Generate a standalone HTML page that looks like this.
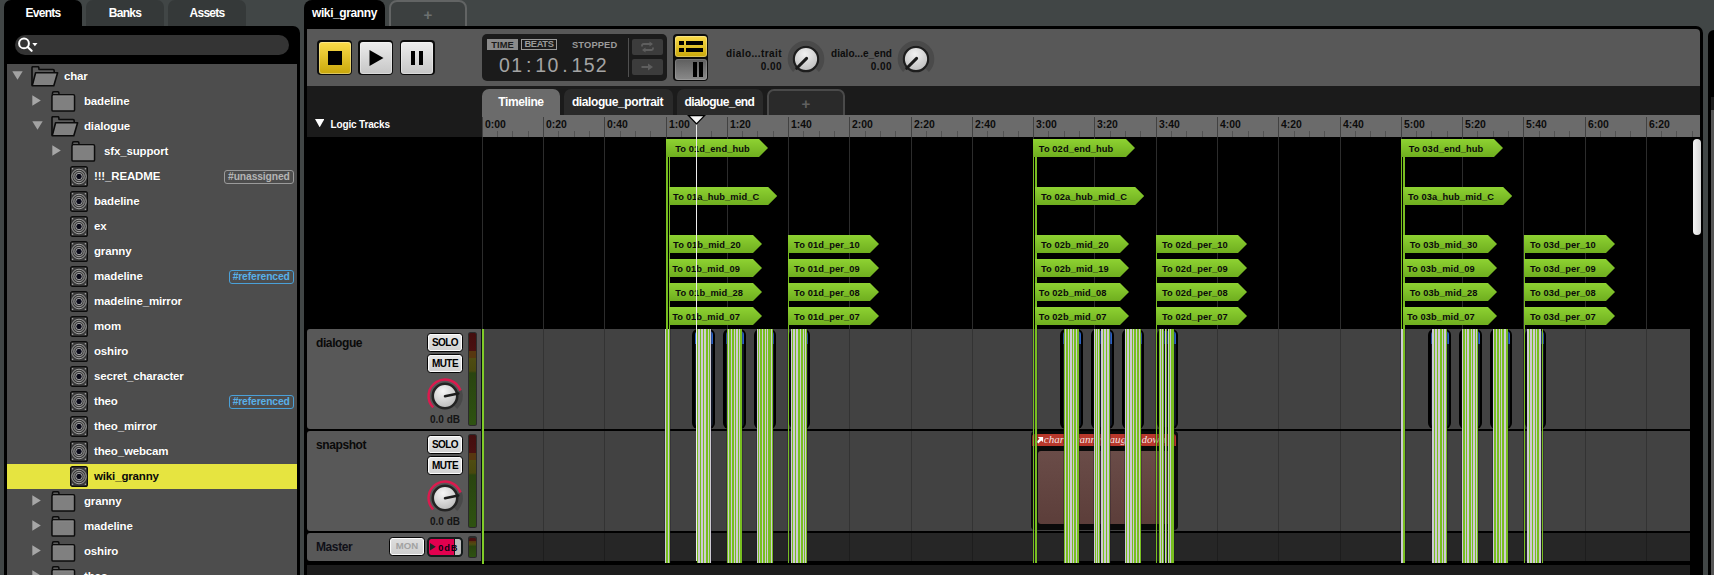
<!DOCTYPE html><html><head><meta charset="utf-8"><title>FMOD Studio</title><style>
*{box-sizing:border-box;margin:0;padding:0}
html,body{width:1714px;height:575px;overflow:hidden;background:#414646}
body{font-family:"Liberation Sans",sans-serif;font-weight:bold;font-size:12px;color:#fff;position:relative}
.ab{position:absolute}
.t12{font-size:12px;letter-spacing:-0.4px;white-space:nowrap;line-height:14px}
.t10{font-size:10px;letter-spacing:-0.3px;white-space:nowrap;line-height:12px}
.row{position:absolute;left:7px;width:290px;height:25px}
.row .lbl{position:absolute;top:5px;font-size:11.5px;letter-spacing:-0.15px;line-height:14px;white-space:nowrap;color:#fff;text-shadow:0 0 1px rgba(0,0,0,.4)}
.tag{position:absolute;right:3.5px;top:5.5px;height:14px;border:1px solid #9a9a9a;border-radius:3px;font-size:10.3px;line-height:12px;padding:0 2.8px;color:#b4b4b4;letter-spacing:-0.12px}
.tag.ref{border-color:#4aa0d8;color:#58b0e8}
.mk{position:absolute;height:18px;background:linear-gradient(#8ed232,#6fae1f);color:#0a0a0a;font-size:9.3px;letter-spacing:0.1px;line-height:20px;white-space:nowrap;text-align:left}
.hdr{position:absolute;left:307px;width:174px;background:#585858;border-radius:3px 0 0 3px}
.btn{position:absolute;border:1.75px solid #060606;border-radius:3.6px;background:linear-gradient(#e8e8e8,#d0d0d0);color:#000;font-size:10px;text-align:center;box-shadow:inset 0 0 0 1.1px #fbfbfb;letter-spacing:-0.55px}
.rl{position:absolute;top:119px;font-size:10.4px;line-height:12px;color:#0c0c0c;letter-spacing:0}
</style></head><body>
<div class="ab" style="left:4px;top:0;width:78px;height:30px;background:#000;border-radius:7px 7px 0 0"></div>
<div class="ab t12" style="left:4px;top:6px;width:78px;text-align:center;color:#fff;letter-spacing:-0.75px">Events</div>
<div class="ab" style="left:86px;top:0;width:78px;height:26px;background:#353939;border-radius:7px 7px 0 0"></div>
<div class="ab t12" style="left:86px;top:6px;width:78px;text-align:center;color:#fff;letter-spacing:-0.75px">Banks</div>
<div class="ab" style="left:168px;top:0;width:78px;height:26px;background:#353939;border-radius:7px 7px 0 0"></div>
<div class="ab t12" style="left:168px;top:6px;width:78px;text-align:center;color:#fff;letter-spacing:-0.75px">Assets</div>
<div class="ab" style="left:4px;top:26px;width:296px;height:560px;background:#000;border-radius:0 7px 0 0"></div>
<div class="ab" style="left:15px;top:35px;width:274px;height:20px;background:#343434;border-radius:10px"></div>
<svg class="ab" style="left:17px;top:36px" width="24" height="18" viewBox="0 0 24 18"><circle cx="7" cy="7.4" r="4.9" fill="none" stroke="#fff" stroke-width="2"/><path d="M10.6 11 L14.6 14.8" stroke="#fff" stroke-width="2.2" stroke-linecap="round"/><path d="M15.3 7 h5.2 l-2.6 3.2z" fill="#fff"/></svg>
<div class="ab" style="left:7px;top:64px;width:290px;height:520px;background:#4d4d4d"></div>
<div class="row" style="top:64px;">
<svg class="ab" style="left:4.6px;top:7.3px" width="11" height="9" viewBox="0 0 11 9"><path d="M0.3 0.3 H10.7 L5.5 8.8z" fill="#a2a2a2"/></svg>
<svg class="ab" style="left:24px;top:2px" width="28" height="21" viewBox="0 0 28 21"><path d="M1 19.500 V1.800 Q1 0.700 2.200 0.700 H6.600 Q7.700 0.700 7.800 1.700 L8 3.500 H22 Q23.200 3.500 23.200 4.700 V8" fill="#5a5a5a" stroke="#0c0c0c" stroke-width="1.600" stroke-linejoin="round"/><path d="M1.200 19.800 L4.600 6.800 H26.600 L22.800 19.800 Z" fill="#808080" stroke="#0c0c0c" stroke-width="1.600" stroke-linejoin="round"/></svg>
<span class="lbl" style="left:57px">char</span>
</div>
<div class="row" style="top:89px;">
<svg class="ab" style="left:25.299999999999997px;top:6.4px" width="9" height="11" viewBox="0 0 9 11"><path d="M0.3 0.3 V10.7 L8.8 5.5z" fill="#a6a6a6"/></svg>
<svg class="ab" style="left:44px;top:1.5px" width="25" height="21" viewBox="0 0 25 21"><path d="M1.500 3.800 V2 Q1.500 0.800 2.700 0.800 H6.700 Q7.900 0.800 7.900 2 V3.800" fill="#5c5c5c" stroke="#0c0c0c" stroke-width="1.500"/><rect x="0.950" y="3.700" width="22.600" height="16.400" rx="1.200" fill="#808080" stroke="#0c0c0c" stroke-width="1.500"/><path d="M2 5 H22.500" stroke="#8e8e8e" stroke-width="0.800"/></svg>
<span class="lbl" style="left:77px">badeline</span>
</div>
<div class="row" style="top:114px;">
<svg class="ab" style="left:24.6px;top:7.3px" width="11" height="9" viewBox="0 0 11 9"><path d="M0.3 0.3 H10.7 L5.5 8.8z" fill="#a2a2a2"/></svg>
<svg class="ab" style="left:44px;top:2px" width="28" height="21" viewBox="0 0 28 21"><path d="M1 19.500 V1.800 Q1 0.700 2.200 0.700 H6.600 Q7.700 0.700 7.800 1.700 L8 3.500 H22 Q23.200 3.500 23.200 4.700 V8" fill="#5a5a5a" stroke="#0c0c0c" stroke-width="1.600" stroke-linejoin="round"/><path d="M1.200 19.800 L4.600 6.800 H26.600 L22.800 19.800 Z" fill="#808080" stroke="#0c0c0c" stroke-width="1.600" stroke-linejoin="round"/></svg>
<span class="lbl" style="left:77px">dialogue</span>
</div>
<div class="row" style="top:139px;">
<svg class="ab" style="left:45.3px;top:6.4px" width="9" height="11" viewBox="0 0 9 11"><path d="M0.3 0.3 V10.7 L8.8 5.5z" fill="#a6a6a6"/></svg>
<svg class="ab" style="left:64px;top:1.5px" width="25" height="21" viewBox="0 0 25 21"><path d="M1.500 3.800 V2 Q1.500 0.800 2.700 0.800 H6.700 Q7.900 0.800 7.900 2 V3.800" fill="#5c5c5c" stroke="#0c0c0c" stroke-width="1.500"/><rect x="0.950" y="3.700" width="22.600" height="16.400" rx="1.200" fill="#808080" stroke="#0c0c0c" stroke-width="1.500"/><path d="M2 5 H22.500" stroke="#8e8e8e" stroke-width="0.800"/></svg>
<span class="lbl" style="left:97px">sfx_support</span>
</div>
<div class="row" style="top:164px;">
<svg class="ab" style="left:63px;top:2px" width="18" height="21" viewBox="0 0 18 21"><rect x="0.6" y="0.6" width="16.8" height="19.8" rx="2" fill="#3a3a3a" stroke="#0c0c0c" stroke-width="1.2"/><circle cx="9" cy="10.5" r="7.3" fill="none" stroke="#a8a8a8" stroke-width="0.9"/><circle cx="9" cy="10.5" r="5.2" fill="none" stroke="#a8a8a8" stroke-width="0.9"/><circle cx="9" cy="10.5" r="3.2" fill="#0a0a18" stroke="#b0b0b0" stroke-width="0.9"/><circle cx="2.6" cy="2.8" r="0.8" fill="#aaa"/><circle cx="15.4" cy="2.8" r="0.8" fill="#aaa"/><circle cx="2.6" cy="18.2" r="0.8" fill="#aaa"/><circle cx="15.4" cy="18.2" r="0.8" fill="#aaa"/></svg>
<span class="lbl" style="left:87px;">!!!_README</span>
<span class="tag">#unassigned</span>
</div>
<div class="row" style="top:189px;">
<svg class="ab" style="left:63px;top:2px" width="18" height="21" viewBox="0 0 18 21"><rect x="0.6" y="0.6" width="16.8" height="19.8" rx="2" fill="#3a3a3a" stroke="#0c0c0c" stroke-width="1.2"/><circle cx="9" cy="10.5" r="7.3" fill="none" stroke="#a8a8a8" stroke-width="0.9"/><circle cx="9" cy="10.5" r="5.2" fill="none" stroke="#a8a8a8" stroke-width="0.9"/><circle cx="9" cy="10.5" r="3.2" fill="#0a0a18" stroke="#b0b0b0" stroke-width="0.9"/><circle cx="2.6" cy="2.8" r="0.8" fill="#aaa"/><circle cx="15.4" cy="2.8" r="0.8" fill="#aaa"/><circle cx="2.6" cy="18.2" r="0.8" fill="#aaa"/><circle cx="15.4" cy="18.2" r="0.8" fill="#aaa"/></svg>
<span class="lbl" style="left:87px;">badeline</span>
</div>
<div class="row" style="top:214px;">
<svg class="ab" style="left:63px;top:2px" width="18" height="21" viewBox="0 0 18 21"><rect x="0.6" y="0.6" width="16.8" height="19.8" rx="2" fill="#3a3a3a" stroke="#0c0c0c" stroke-width="1.2"/><circle cx="9" cy="10.5" r="7.3" fill="none" stroke="#a8a8a8" stroke-width="0.9"/><circle cx="9" cy="10.5" r="5.2" fill="none" stroke="#a8a8a8" stroke-width="0.9"/><circle cx="9" cy="10.5" r="3.2" fill="#0a0a18" stroke="#b0b0b0" stroke-width="0.9"/><circle cx="2.6" cy="2.8" r="0.8" fill="#aaa"/><circle cx="15.4" cy="2.8" r="0.8" fill="#aaa"/><circle cx="2.6" cy="18.2" r="0.8" fill="#aaa"/><circle cx="15.4" cy="18.2" r="0.8" fill="#aaa"/></svg>
<span class="lbl" style="left:87px;">ex</span>
</div>
<div class="row" style="top:239px;">
<svg class="ab" style="left:63px;top:2px" width="18" height="21" viewBox="0 0 18 21"><rect x="0.6" y="0.6" width="16.8" height="19.8" rx="2" fill="#3a3a3a" stroke="#0c0c0c" stroke-width="1.2"/><circle cx="9" cy="10.5" r="7.3" fill="none" stroke="#a8a8a8" stroke-width="0.9"/><circle cx="9" cy="10.5" r="5.2" fill="none" stroke="#a8a8a8" stroke-width="0.9"/><circle cx="9" cy="10.5" r="3.2" fill="#0a0a18" stroke="#b0b0b0" stroke-width="0.9"/><circle cx="2.6" cy="2.8" r="0.8" fill="#aaa"/><circle cx="15.4" cy="2.8" r="0.8" fill="#aaa"/><circle cx="2.6" cy="18.2" r="0.8" fill="#aaa"/><circle cx="15.4" cy="18.2" r="0.8" fill="#aaa"/></svg>
<span class="lbl" style="left:87px;">granny</span>
</div>
<div class="row" style="top:264px;">
<svg class="ab" style="left:63px;top:2px" width="18" height="21" viewBox="0 0 18 21"><rect x="0.6" y="0.6" width="16.8" height="19.8" rx="2" fill="#3a3a3a" stroke="#0c0c0c" stroke-width="1.2"/><circle cx="9" cy="10.5" r="7.3" fill="none" stroke="#a8a8a8" stroke-width="0.9"/><circle cx="9" cy="10.5" r="5.2" fill="none" stroke="#a8a8a8" stroke-width="0.9"/><circle cx="9" cy="10.5" r="3.2" fill="#0a0a18" stroke="#b0b0b0" stroke-width="0.9"/><circle cx="2.6" cy="2.8" r="0.8" fill="#aaa"/><circle cx="15.4" cy="2.8" r="0.8" fill="#aaa"/><circle cx="2.6" cy="18.2" r="0.8" fill="#aaa"/><circle cx="15.4" cy="18.2" r="0.8" fill="#aaa"/></svg>
<span class="lbl" style="left:87px;">madeline</span>
<span class="tag ref">#referenced</span>
</div>
<div class="row" style="top:289px;">
<svg class="ab" style="left:63px;top:2px" width="18" height="21" viewBox="0 0 18 21"><rect x="0.6" y="0.6" width="16.8" height="19.8" rx="2" fill="#3a3a3a" stroke="#0c0c0c" stroke-width="1.2"/><circle cx="9" cy="10.5" r="7.3" fill="none" stroke="#a8a8a8" stroke-width="0.9"/><circle cx="9" cy="10.5" r="5.2" fill="none" stroke="#a8a8a8" stroke-width="0.9"/><circle cx="9" cy="10.5" r="3.2" fill="#0a0a18" stroke="#b0b0b0" stroke-width="0.9"/><circle cx="2.6" cy="2.8" r="0.8" fill="#aaa"/><circle cx="15.4" cy="2.8" r="0.8" fill="#aaa"/><circle cx="2.6" cy="18.2" r="0.8" fill="#aaa"/><circle cx="15.4" cy="18.2" r="0.8" fill="#aaa"/></svg>
<span class="lbl" style="left:87px;">madeline_mirror</span>
</div>
<div class="row" style="top:314px;">
<svg class="ab" style="left:63px;top:2px" width="18" height="21" viewBox="0 0 18 21"><rect x="0.6" y="0.6" width="16.8" height="19.8" rx="2" fill="#3a3a3a" stroke="#0c0c0c" stroke-width="1.2"/><circle cx="9" cy="10.5" r="7.3" fill="none" stroke="#a8a8a8" stroke-width="0.9"/><circle cx="9" cy="10.5" r="5.2" fill="none" stroke="#a8a8a8" stroke-width="0.9"/><circle cx="9" cy="10.5" r="3.2" fill="#0a0a18" stroke="#b0b0b0" stroke-width="0.9"/><circle cx="2.6" cy="2.8" r="0.8" fill="#aaa"/><circle cx="15.4" cy="2.8" r="0.8" fill="#aaa"/><circle cx="2.6" cy="18.2" r="0.8" fill="#aaa"/><circle cx="15.4" cy="18.2" r="0.8" fill="#aaa"/></svg>
<span class="lbl" style="left:87px;">mom</span>
</div>
<div class="row" style="top:339px;">
<svg class="ab" style="left:63px;top:2px" width="18" height="21" viewBox="0 0 18 21"><rect x="0.6" y="0.6" width="16.8" height="19.8" rx="2" fill="#3a3a3a" stroke="#0c0c0c" stroke-width="1.2"/><circle cx="9" cy="10.5" r="7.3" fill="none" stroke="#a8a8a8" stroke-width="0.9"/><circle cx="9" cy="10.5" r="5.2" fill="none" stroke="#a8a8a8" stroke-width="0.9"/><circle cx="9" cy="10.5" r="3.2" fill="#0a0a18" stroke="#b0b0b0" stroke-width="0.9"/><circle cx="2.6" cy="2.8" r="0.8" fill="#aaa"/><circle cx="15.4" cy="2.8" r="0.8" fill="#aaa"/><circle cx="2.6" cy="18.2" r="0.8" fill="#aaa"/><circle cx="15.4" cy="18.2" r="0.8" fill="#aaa"/></svg>
<span class="lbl" style="left:87px;">oshiro</span>
</div>
<div class="row" style="top:364px;">
<svg class="ab" style="left:63px;top:2px" width="18" height="21" viewBox="0 0 18 21"><rect x="0.6" y="0.6" width="16.8" height="19.8" rx="2" fill="#3a3a3a" stroke="#0c0c0c" stroke-width="1.2"/><circle cx="9" cy="10.5" r="7.3" fill="none" stroke="#a8a8a8" stroke-width="0.9"/><circle cx="9" cy="10.5" r="5.2" fill="none" stroke="#a8a8a8" stroke-width="0.9"/><circle cx="9" cy="10.5" r="3.2" fill="#0a0a18" stroke="#b0b0b0" stroke-width="0.9"/><circle cx="2.6" cy="2.8" r="0.8" fill="#aaa"/><circle cx="15.4" cy="2.8" r="0.8" fill="#aaa"/><circle cx="2.6" cy="18.2" r="0.8" fill="#aaa"/><circle cx="15.4" cy="18.2" r="0.8" fill="#aaa"/></svg>
<span class="lbl" style="left:87px;">secret_character</span>
</div>
<div class="row" style="top:389px;">
<svg class="ab" style="left:63px;top:2px" width="18" height="21" viewBox="0 0 18 21"><rect x="0.6" y="0.6" width="16.8" height="19.8" rx="2" fill="#3a3a3a" stroke="#0c0c0c" stroke-width="1.2"/><circle cx="9" cy="10.5" r="7.3" fill="none" stroke="#a8a8a8" stroke-width="0.9"/><circle cx="9" cy="10.5" r="5.2" fill="none" stroke="#a8a8a8" stroke-width="0.9"/><circle cx="9" cy="10.5" r="3.2" fill="#0a0a18" stroke="#b0b0b0" stroke-width="0.9"/><circle cx="2.6" cy="2.8" r="0.8" fill="#aaa"/><circle cx="15.4" cy="2.8" r="0.8" fill="#aaa"/><circle cx="2.6" cy="18.2" r="0.8" fill="#aaa"/><circle cx="15.4" cy="18.2" r="0.8" fill="#aaa"/></svg>
<span class="lbl" style="left:87px;">theo</span>
<span class="tag ref">#referenced</span>
</div>
<div class="row" style="top:414px;">
<svg class="ab" style="left:63px;top:2px" width="18" height="21" viewBox="0 0 18 21"><rect x="0.6" y="0.6" width="16.8" height="19.8" rx="2" fill="#3a3a3a" stroke="#0c0c0c" stroke-width="1.2"/><circle cx="9" cy="10.5" r="7.3" fill="none" stroke="#a8a8a8" stroke-width="0.9"/><circle cx="9" cy="10.5" r="5.2" fill="none" stroke="#a8a8a8" stroke-width="0.9"/><circle cx="9" cy="10.5" r="3.2" fill="#0a0a18" stroke="#b0b0b0" stroke-width="0.9"/><circle cx="2.6" cy="2.8" r="0.8" fill="#aaa"/><circle cx="15.4" cy="2.8" r="0.8" fill="#aaa"/><circle cx="2.6" cy="18.2" r="0.8" fill="#aaa"/><circle cx="15.4" cy="18.2" r="0.8" fill="#aaa"/></svg>
<span class="lbl" style="left:87px;">theo_mirror</span>
</div>
<div class="row" style="top:439px;">
<svg class="ab" style="left:63px;top:2px" width="18" height="21" viewBox="0 0 18 21"><rect x="0.6" y="0.6" width="16.8" height="19.8" rx="2" fill="#3a3a3a" stroke="#0c0c0c" stroke-width="1.2"/><circle cx="9" cy="10.5" r="7.3" fill="none" stroke="#a8a8a8" stroke-width="0.9"/><circle cx="9" cy="10.5" r="5.2" fill="none" stroke="#a8a8a8" stroke-width="0.9"/><circle cx="9" cy="10.5" r="3.2" fill="#0a0a18" stroke="#b0b0b0" stroke-width="0.9"/><circle cx="2.6" cy="2.8" r="0.8" fill="#aaa"/><circle cx="15.4" cy="2.8" r="0.8" fill="#aaa"/><circle cx="2.6" cy="18.2" r="0.8" fill="#aaa"/><circle cx="15.4" cy="18.2" r="0.8" fill="#aaa"/></svg>
<span class="lbl" style="left:87px;">theo_webcam</span>
</div>
<div class="row" style="top:464px;background:#e6e440;">
<svg class="ab" style="left:63px;top:2px" width="18" height="21" viewBox="0 0 18 21"><rect x="0.6" y="0.6" width="16.8" height="19.8" rx="2" fill="#3a3a3a" stroke="#0c0c0c" stroke-width="1.2"/><circle cx="9" cy="10.5" r="7.3" fill="none" stroke="#a8a8a8" stroke-width="0.9"/><circle cx="9" cy="10.5" r="5.2" fill="none" stroke="#a8a8a8" stroke-width="0.9"/><circle cx="9" cy="10.5" r="3.2" fill="#0a0a18" stroke="#b0b0b0" stroke-width="0.9"/><circle cx="2.6" cy="2.8" r="0.8" fill="#aaa"/><circle cx="15.4" cy="2.8" r="0.8" fill="#aaa"/><circle cx="2.6" cy="18.2" r="0.8" fill="#aaa"/><circle cx="15.4" cy="18.2" r="0.8" fill="#aaa"/></svg>
<span class="lbl" style="left:87px;color:#0a0a0a;text-shadow:none;">wiki_granny</span>
</div>
<div class="row" style="top:489px;">
<svg class="ab" style="left:25.299999999999997px;top:6.4px" width="9" height="11" viewBox="0 0 9 11"><path d="M0.3 0.3 V10.7 L8.8 5.5z" fill="#a6a6a6"/></svg>
<svg class="ab" style="left:44px;top:1.5px" width="25" height="21" viewBox="0 0 25 21"><path d="M1.500 3.800 V2 Q1.500 0.800 2.700 0.800 H6.700 Q7.900 0.800 7.900 2 V3.800" fill="#5c5c5c" stroke="#0c0c0c" stroke-width="1.500"/><rect x="0.950" y="3.700" width="22.600" height="16.400" rx="1.200" fill="#808080" stroke="#0c0c0c" stroke-width="1.500"/><path d="M2 5 H22.500" stroke="#8e8e8e" stroke-width="0.800"/></svg>
<span class="lbl" style="left:77px">granny</span>
</div>
<div class="row" style="top:514px;">
<svg class="ab" style="left:25.299999999999997px;top:6.4px" width="9" height="11" viewBox="0 0 9 11"><path d="M0.3 0.3 V10.7 L8.8 5.5z" fill="#a6a6a6"/></svg>
<svg class="ab" style="left:44px;top:1.5px" width="25" height="21" viewBox="0 0 25 21"><path d="M1.500 3.800 V2 Q1.500 0.800 2.700 0.800 H6.700 Q7.900 0.800 7.900 2 V3.800" fill="#5c5c5c" stroke="#0c0c0c" stroke-width="1.500"/><rect x="0.950" y="3.700" width="22.600" height="16.400" rx="1.200" fill="#808080" stroke="#0c0c0c" stroke-width="1.500"/><path d="M2 5 H22.500" stroke="#8e8e8e" stroke-width="0.800"/></svg>
<span class="lbl" style="left:77px">madeline</span>
</div>
<div class="row" style="top:539px;">
<svg class="ab" style="left:25.299999999999997px;top:6.4px" width="9" height="11" viewBox="0 0 9 11"><path d="M0.3 0.3 V10.7 L8.8 5.5z" fill="#a6a6a6"/></svg>
<svg class="ab" style="left:44px;top:1.5px" width="25" height="21" viewBox="0 0 25 21"><path d="M1.500 3.800 V2 Q1.500 0.800 2.700 0.800 H6.700 Q7.900 0.800 7.900 2 V3.800" fill="#5c5c5c" stroke="#0c0c0c" stroke-width="1.500"/><rect x="0.950" y="3.700" width="22.600" height="16.400" rx="1.200" fill="#808080" stroke="#0c0c0c" stroke-width="1.500"/><path d="M2 5 H22.500" stroke="#8e8e8e" stroke-width="0.800"/></svg>
<span class="lbl" style="left:77px">oshiro</span>
</div>
<div class="row" style="top:564px;">
<svg class="ab" style="left:25.299999999999997px;top:6.4px" width="9" height="11" viewBox="0 0 9 11"><path d="M0.3 0.3 V10.7 L8.8 5.5z" fill="#a6a6a6"/></svg>
<svg class="ab" style="left:44px;top:1.5px" width="25" height="21" viewBox="0 0 25 21"><path d="M1.500 3.800 V2 Q1.500 0.800 2.700 0.800 H6.700 Q7.900 0.800 7.900 2 V3.800" fill="#5c5c5c" stroke="#0c0c0c" stroke-width="1.500"/><rect x="0.950" y="3.700" width="22.600" height="16.400" rx="1.200" fill="#808080" stroke="#0c0c0c" stroke-width="1.500"/><path d="M2 5 H22.500" stroke="#8e8e8e" stroke-width="0.800"/></svg>
<span class="lbl" style="left:77px">theo</span>
</div>
<div class="ab" style="left:304px;top:0;width:81px;height:30px;background:#000;border-radius:8px 8px 0 0"></div>
<div class="ab t12" style="left:312px;top:6px;color:#fff">wiki_granny</div>
<div class="ab" style="left:389px;top:-0.5px;width:78px;height:30px;border:2px solid #626464;border-radius:8px 8px 0 0;background:#3c4040"></div>
<div class="ab" style="left:389px;top:6.5px;width:78px;text-align:center;color:#6c7070;font-size:15px;line-height:16px">+</div>
<div class="ab" style="left:304px;top:26px;width:1399px;height:560px;background:#000;border-radius:0 7px 0 0"></div>
<div class="ab" style="left:1708px;top:30px;width:10px;height:560px;background:#000;border-radius:6px 0 0 0"></div>
<div class="ab" style="left:1711px;top:97px;width:10px;height:13px;background:#1c1c1c"></div>
<div class="ab" style="left:1711px;top:110px;width:10px;height:500px;background:#565656"></div>
<div class="ab" style="left:307px;top:29px;width:1393px;height:57px;background:#585858;border-radius:0 4px 0 0"></div>
<div class="ab" style="left:307px;top:86px;width:1393px;height:51px;background:#1b1b1b"></div>
<div class="ab" style="left:307px;top:564.5px;width:1383px;height:20px;background:#1c1c1c"></div>
<div class="ab" style="left:317px;top:40px;width:35px;height:35px;background:#0c0c0c;border-radius:4px"></div>
<div class="ab" style="left:318.5px;top:41.5px;width:32px;height:32px;background:linear-gradient(#fbdc4a,#c9a70a);border-radius:3px;box-shadow:inset 0 0 0 1px rgba(255,255,255,.35)"></div>
<div class="ab" style="left:328px;top:51px;width:14px;height:14px;background:#000"></div>
<div class="ab" style="left:358px;top:40px;width:35px;height:35px;background:#0c0c0c;border-radius:4px"></div>
<div class="ab" style="left:359.5px;top:41.5px;width:32px;height:32px;background:linear-gradient(#ececec,#c6c6c6);border-radius:3px;box-shadow:inset 0 0 0 1px rgba(255,255,255,.35)"></div>
<svg class="ab" style="left:369px;top:50px" width="15" height="16" viewBox="0 0 15 16"><path d="M0.5 0 L14.5 8 L0.5 16z" fill="#000"/></svg>
<div class="ab" style="left:399.5px;top:40px;width:35px;height:35px;background:#0c0c0c;border-radius:4px"></div>
<div class="ab" style="left:401.0px;top:41.5px;width:32px;height:32px;background:linear-gradient(#ececec,#c6c6c6);border-radius:3px;box-shadow:inset 0 0 0 1px rgba(255,255,255,.35)"></div>
<div class="ab" style="left:411px;top:51px;width:4px;height:14px;background:#000"></div><div class="ab" style="left:418.5px;top:51px;width:4px;height:14px;background:#000"></div>
<div class="ab" style="left:482px;top:34px;width:185px;height:47px;background:#1b1b1b;border-radius:5px"></div>
<div class="ab" style="left:487px;top:39px;width:31px;height:11px;background:#8a8a8a;color:#1a1a1a;font-size:9.3px;line-height:12.5px;text-align:center;letter-spacing:0.1px">TIME</div>
<div class="ab" style="left:521px;top:39px;width:36px;height:11px;border:1px solid #9a9a9a;color:#9a9a9a;line-height:9.5px;text-align:center;letter-spacing:-0.35px;font-size:9.3px">BEATS</div>
<div class="ab" style="left:572px;top:39px;color:#9a9a9a;font-size:9.3px;line-height:12px;letter-spacing:0.15px">STOPPED</div>
<div class="ab" style="left:498.5px;top:53px;color:#a4a4a4;font-weight:normal;font-size:19.5px;line-height:24px;white-space:nowrap"><span style="display:inline-block;width:12.08px;text-align:center">0</span><span style="display:inline-block;width:12.08px;text-align:center">1</span><span style="display:inline-block;width:12.08px;text-align:center">:</span><span style="display:inline-block;width:12.08px;text-align:center">1</span><span style="display:inline-block;width:12.08px;text-align:center">0</span><span style="display:inline-block;width:12.08px;text-align:center">.</span><span style="display:inline-block;width:12.08px;text-align:center">1</span><span style="display:inline-block;width:12.08px;text-align:center">5</span><span style="display:inline-block;width:12.08px;text-align:center">2</span></div>
<div class="ab" style="left:628px;top:38px;width:1px;height:39px;background:#505050"></div>
<div class="ab" style="left:632px;top:39px;width:31px;height:16px;background:#3c3c3c;border-radius:2px"></div>
<div class="ab" style="left:632px;top:59px;width:31px;height:16px;background:#3c3c3c;border-radius:2px"></div>
<svg class="ab" style="left:640px;top:41px" width="15" height="12" viewBox="0 0 15 12"><path d="M2 5.5 V4.5 Q2 3 3.5 3 H10" fill="none" stroke="#5e5e5e" stroke-width="1.8"/><path d="M9.5 0.5 L13 3 L9.5 5.5z" fill="#5e5e5e"/><path d="M13 6.5 V7.5 Q13 9 11.5 9 H5" fill="none" stroke="#5e5e5e" stroke-width="1.8"/><path d="M5.5 6.500 L2 9 L5.5 11.5z" fill="#5e5e5e"/></svg>
<svg class="ab" style="left:641px;top:62px" width="13" height="10" viewBox="0 0 13 10"><path d="M0.5 5 H8" stroke="#5e5e5e" stroke-width="2"/><path d="M7 1.5 L12 5 L7 8.5z" fill="#5e5e5e"/></svg>
<div class="ab" style="left:673px;top:34px;width:35px;height:47px;background:#0c0c0c;border-radius:4px"></div>
<div class="ab" style="left:675px;top:36px;width:32px;height:21px;background:linear-gradient(#fbdc4a,#c9a70a);border-radius:3px;box-shadow:inset 0 0 0 1px rgba(255,255,255,.3)"></div>
<div class="ab" style="left:675px;top:59px;width:32px;height:21px;background:linear-gradient(#5e5e5e,#8a8a8a);border-radius:3px;box-shadow:inset 0 0 0 1px rgba(255,255,255,.15)"></div>
<div class="ab" style="left:679px;top:41px;width:5px;height:4px;background:#000"></div><div class="ab" style="left:686px;top:41px;width:17px;height:4px;background:#000"></div>
<div class="ab" style="left:679px;top:48px;width:5px;height:4px;background:#000"></div><div class="ab" style="left:686px;top:48px;width:17px;height:4px;background:#000"></div>
<div class="ab" style="left:693px;top:62px;width:3.5px;height:15px;background:#000"></div><div class="ab" style="left:699px;top:62px;width:3.5px;height:15px;background:#000"></div>
<div class="ab t10" style="left:702px;top:47.6px;width:80px;text-align:right;color:#0c0c0c;letter-spacing:0.42px">dialo...trait</div>
<div class="ab t10" style="left:702px;top:60.5px;width:80px;text-align:right;color:#0c0c0c;letter-spacing:0.45px">0.00</div>
<svg class="ab" style="left:786px;top:39px" width="40" height="40" viewBox="-20 -20 40 40"><defs><radialGradient id="kg806" cx="0.45" cy="0.3" r="0.8"><stop offset="0" stop-color="#f2f2f2"/><stop offset="1" stop-color="#b6b6b6"/></radialGradient></defs><path d="M-11.240 11.240 A15.900 15.900 0 1 1 11.240 11.240" fill="none" stroke="#4a4a4a" stroke-width="4.800"/><circle r="12.2" fill="url(#kg806)" stroke="#1e1e1e" stroke-width="2.2"/><path d="M0.600 -0.600 L-9.300 9.300" stroke="#1a1a1a" stroke-width="3" stroke-linecap="round"/></svg>
<div class="ab t10" style="left:812px;top:47.6px;width:80px;text-align:right;color:#0c0c0c;letter-spacing:0.03px">dialo...e_end</div>
<div class="ab t10" style="left:812px;top:60.5px;width:80px;text-align:right;color:#0c0c0c;letter-spacing:0.45px">0.00</div>
<svg class="ab" style="left:896.3px;top:39px" width="40" height="40" viewBox="-20 -20 40 40"><defs><radialGradient id="kg916" cx="0.45" cy="0.3" r="0.8"><stop offset="0" stop-color="#f2f2f2"/><stop offset="1" stop-color="#b6b6b6"/></radialGradient></defs><path d="M-11.240 11.240 A15.900 15.900 0 1 1 11.240 11.240" fill="none" stroke="#4a4a4a" stroke-width="4.800"/><circle r="12.2" fill="url(#kg916)" stroke="#1e1e1e" stroke-width="2.2"/><path d="M0.600 -0.600 L-9.300 9.300" stroke="#1a1a1a" stroke-width="3" stroke-linecap="round"/></svg>
<div class="ab" style="left:482px;top:89px;width:78px;height:27px;background:#6b6b6b;border-radius:7px 7px 0 0"></div>
<div class="ab t12" style="left:482px;top:95px;width:78px;text-align:center">Timeline</div>
<div class="ab" style="left:564px;top:89px;width:109px;height:26px;background:#2a2a2a;border-radius:7px 7px 0 0"></div>
<div class="ab t12" style="left:563px;top:95px;width:109px;text-align:center">dialogue_portrait</div>
<div class="ab" style="left:677px;top:89px;width:86px;height:26px;background:#2a2a2a;border-radius:7px 7px 0 0"></div>
<div class="ab t12" style="left:676.3px;top:95px;width:86px;text-align:center;letter-spacing:-0.65px">dialogue_end</div>
<div class="ab" style="left:767px;top:89px;width:78px;height:28px;border:2px solid #4a4a4a;border-radius:7px 7px 0 0;background:#2a2a2a"></div>
<div class="ab" style="left:767px;top:95.5px;width:78px;text-align:center;color:#606060;font-size:15px;line-height:16px">+</div>
<div class="ab" style="left:482px;top:115px;width:1218px;height:22px;background:#6b6b6b"></div>
<svg class="ab" style="left:314.7px;top:119px" width="9.4" height="8.3" viewBox="0 0 10 8" preserveAspectRatio="none"><path d="M0 0 H10 L5 8z" fill="#fff"/></svg>
<div class="ab t10" style="left:330.5px;top:118.6px;color:#fff;letter-spacing:-0.15px">Logic Tracks</div>
<div class="ab" style="left:497px;top:131px;width:1px;height:6px;background:#525252"></div>
<div class="ab" style="left:512px;top:131px;width:1px;height:6px;background:#525252"></div>
<div class="ab" style="left:528px;top:131px;width:1px;height:6px;background:#525252"></div>
<div class="ab" style="left:558px;top:131px;width:1px;height:6px;background:#525252"></div>
<div class="ab" style="left:574px;top:131px;width:1px;height:6px;background:#525252"></div>
<div class="ab" style="left:589px;top:131px;width:1px;height:6px;background:#525252"></div>
<div class="ab" style="left:620px;top:131px;width:1px;height:6px;background:#525252"></div>
<div class="ab" style="left:635px;top:131px;width:1px;height:6px;background:#525252"></div>
<div class="ab" style="left:650px;top:131px;width:1px;height:6px;background:#525252"></div>
<div class="ab" style="left:681px;top:131px;width:1px;height:6px;background:#525252"></div>
<div class="ab" style="left:696px;top:131px;width:1px;height:6px;background:#525252"></div>
<div class="ab" style="left:711px;top:131px;width:1px;height:6px;background:#525252"></div>
<div class="ab" style="left:742px;top:131px;width:1px;height:6px;background:#525252"></div>
<div class="ab" style="left:757px;top:131px;width:1px;height:6px;background:#525252"></div>
<div class="ab" style="left:773px;top:131px;width:1px;height:6px;background:#525252"></div>
<div class="ab" style="left:803px;top:131px;width:1px;height:6px;background:#525252"></div>
<div class="ab" style="left:819px;top:131px;width:1px;height:6px;background:#525252"></div>
<div class="ab" style="left:834px;top:131px;width:1px;height:6px;background:#525252"></div>
<div class="ab" style="left:865px;top:131px;width:1px;height:6px;background:#525252"></div>
<div class="ab" style="left:880px;top:131px;width:1px;height:6px;background:#525252"></div>
<div class="ab" style="left:895px;top:131px;width:1px;height:6px;background:#525252"></div>
<div class="ab" style="left:926px;top:131px;width:1px;height:6px;background:#525252"></div>
<div class="ab" style="left:941px;top:131px;width:1px;height:6px;background:#525252"></div>
<div class="ab" style="left:957px;top:131px;width:1px;height:6px;background:#525252"></div>
<div class="ab" style="left:987px;top:131px;width:1px;height:6px;background:#525252"></div>
<div class="ab" style="left:1003px;top:131px;width:1px;height:6px;background:#525252"></div>
<div class="ab" style="left:1018px;top:131px;width:1px;height:6px;background:#525252"></div>
<div class="ab" style="left:1048px;top:131px;width:1px;height:6px;background:#525252"></div>
<div class="ab" style="left:1064px;top:131px;width:1px;height:6px;background:#525252"></div>
<div class="ab" style="left:1079px;top:131px;width:1px;height:6px;background:#525252"></div>
<div class="ab" style="left:1110px;top:131px;width:1px;height:6px;background:#525252"></div>
<div class="ab" style="left:1125px;top:131px;width:1px;height:6px;background:#525252"></div>
<div class="ab" style="left:1140px;top:131px;width:1px;height:6px;background:#525252"></div>
<div class="ab" style="left:1171px;top:131px;width:1px;height:6px;background:#525252"></div>
<div class="ab" style="left:1186px;top:131px;width:1px;height:6px;background:#525252"></div>
<div class="ab" style="left:1202px;top:131px;width:1px;height:6px;background:#525252"></div>
<div class="ab" style="left:1232px;top:131px;width:1px;height:6px;background:#525252"></div>
<div class="ab" style="left:1248px;top:131px;width:1px;height:6px;background:#525252"></div>
<div class="ab" style="left:1263px;top:131px;width:1px;height:6px;background:#525252"></div>
<div class="ab" style="left:1294px;top:131px;width:1px;height:6px;background:#525252"></div>
<div class="ab" style="left:1309px;top:131px;width:1px;height:6px;background:#525252"></div>
<div class="ab" style="left:1324px;top:131px;width:1px;height:6px;background:#525252"></div>
<div class="ab" style="left:1355px;top:131px;width:1px;height:6px;background:#525252"></div>
<div class="ab" style="left:1370px;top:131px;width:1px;height:6px;background:#525252"></div>
<div class="ab" style="left:1385px;top:131px;width:1px;height:6px;background:#525252"></div>
<div class="ab" style="left:1416px;top:131px;width:1px;height:6px;background:#525252"></div>
<div class="ab" style="left:1431px;top:131px;width:1px;height:6px;background:#525252"></div>
<div class="ab" style="left:1447px;top:131px;width:1px;height:6px;background:#525252"></div>
<div class="ab" style="left:1477px;top:131px;width:1px;height:6px;background:#525252"></div>
<div class="ab" style="left:1493px;top:131px;width:1px;height:6px;background:#525252"></div>
<div class="ab" style="left:1508px;top:131px;width:1px;height:6px;background:#525252"></div>
<div class="ab" style="left:1539px;top:131px;width:1px;height:6px;background:#525252"></div>
<div class="ab" style="left:1554px;top:131px;width:1px;height:6px;background:#525252"></div>
<div class="ab" style="left:1569px;top:131px;width:1px;height:6px;background:#525252"></div>
<div class="ab" style="left:1600px;top:131px;width:1px;height:6px;background:#525252"></div>
<div class="ab" style="left:1615px;top:131px;width:1px;height:6px;background:#525252"></div>
<div class="ab" style="left:1630px;top:131px;width:1px;height:6px;background:#525252"></div>
<div class="ab" style="left:1661px;top:131px;width:1px;height:6px;background:#525252"></div>
<div class="ab" style="left:1676px;top:131px;width:1px;height:6px;background:#525252"></div>
<div class="ab" style="left:1692px;top:131px;width:1px;height:6px;background:#525252"></div>
<div class="ab" style="left:482px;top:117px;width:1px;height:20px;background:#414141"></div>
<div class="rl" style="left:485px">0:00</div>
<div class="ab" style="left:543px;top:117px;width:1px;height:20px;background:#414141"></div>
<div class="rl" style="left:546px">0:20</div>
<div class="ab" style="left:604px;top:117px;width:1px;height:20px;background:#414141"></div>
<div class="rl" style="left:607px">0:40</div>
<div class="ab" style="left:666px;top:117px;width:1px;height:20px;background:#414141"></div>
<div class="rl" style="left:669px">1:00</div>
<div class="ab" style="left:727px;top:117px;width:1px;height:20px;background:#414141"></div>
<div class="rl" style="left:730px">1:20</div>
<div class="ab" style="left:788px;top:117px;width:1px;height:20px;background:#414141"></div>
<div class="rl" style="left:791px">1:40</div>
<div class="ab" style="left:849px;top:117px;width:1px;height:20px;background:#414141"></div>
<div class="rl" style="left:852px">2:00</div>
<div class="ab" style="left:911px;top:117px;width:1px;height:20px;background:#414141"></div>
<div class="rl" style="left:914px">2:20</div>
<div class="ab" style="left:972px;top:117px;width:1px;height:20px;background:#414141"></div>
<div class="rl" style="left:975px">2:40</div>
<div class="ab" style="left:1033px;top:117px;width:1px;height:20px;background:#414141"></div>
<div class="rl" style="left:1036px">3:00</div>
<div class="ab" style="left:1094px;top:117px;width:1px;height:20px;background:#414141"></div>
<div class="rl" style="left:1097px">3:20</div>
<div class="ab" style="left:1156px;top:117px;width:1px;height:20px;background:#414141"></div>
<div class="rl" style="left:1159px">3:40</div>
<div class="ab" style="left:1217px;top:117px;width:1px;height:20px;background:#414141"></div>
<div class="rl" style="left:1220px">4:00</div>
<div class="ab" style="left:1278px;top:117px;width:1px;height:20px;background:#414141"></div>
<div class="rl" style="left:1281px">4:20</div>
<div class="ab" style="left:1340px;top:117px;width:1px;height:20px;background:#414141"></div>
<div class="rl" style="left:1343px">4:40</div>
<div class="ab" style="left:1401px;top:117px;width:1px;height:20px;background:#414141"></div>
<div class="rl" style="left:1404px">5:00</div>
<div class="ab" style="left:1462px;top:117px;width:1px;height:20px;background:#414141"></div>
<div class="rl" style="left:1465px">5:20</div>
<div class="ab" style="left:1523px;top:117px;width:1px;height:20px;background:#414141"></div>
<div class="rl" style="left:1526px">5:40</div>
<div class="ab" style="left:1585px;top:117px;width:1px;height:20px;background:#414141"></div>
<div class="rl" style="left:1588px">6:00</div>
<div class="ab" style="left:1646px;top:117px;width:1px;height:20px;background:#414141"></div>
<div class="rl" style="left:1649px">6:20</div>
<div class="ab" style="left:307px;top:137px;width:1383px;height:192px;background:#000"></div>
<div class="ab" style="left:484px;top:329px;width:1206px;height:100px;background:#424242"></div>
<div class="ab" style="left:484px;top:431px;width:1206px;height:100px;background:#424242"></div>
<div class="ab" style="left:484px;top:533px;width:1206px;height:28px;background:#262626"></div>
<div class="ab" style="left:482px;top:137px;width:1px;height:192px;background:#2c2c2c"></div>
<div class="ab" style="left:543px;top:137px;width:1px;height:192px;background:#2c2c2c"></div>
<div class="ab" style="left:543px;top:329px;width:1px;height:232px;background:rgba(0,0,0,.22)"></div>
<div class="ab" style="left:604px;top:137px;width:1px;height:192px;background:#2c2c2c"></div>
<div class="ab" style="left:604px;top:329px;width:1px;height:232px;background:rgba(0,0,0,.22)"></div>
<div class="ab" style="left:666px;top:137px;width:1px;height:192px;background:#2c2c2c"></div>
<div class="ab" style="left:666px;top:329px;width:1px;height:232px;background:rgba(0,0,0,.22)"></div>
<div class="ab" style="left:727px;top:137px;width:1px;height:192px;background:#2c2c2c"></div>
<div class="ab" style="left:727px;top:329px;width:1px;height:232px;background:rgba(0,0,0,.22)"></div>
<div class="ab" style="left:788px;top:137px;width:1px;height:192px;background:#2c2c2c"></div>
<div class="ab" style="left:788px;top:329px;width:1px;height:232px;background:rgba(0,0,0,.22)"></div>
<div class="ab" style="left:849px;top:137px;width:1px;height:192px;background:#2c2c2c"></div>
<div class="ab" style="left:849px;top:329px;width:1px;height:232px;background:rgba(0,0,0,.22)"></div>
<div class="ab" style="left:911px;top:137px;width:1px;height:192px;background:#2c2c2c"></div>
<div class="ab" style="left:911px;top:329px;width:1px;height:232px;background:rgba(0,0,0,.22)"></div>
<div class="ab" style="left:972px;top:137px;width:1px;height:192px;background:#2c2c2c"></div>
<div class="ab" style="left:972px;top:329px;width:1px;height:232px;background:rgba(0,0,0,.22)"></div>
<div class="ab" style="left:1033px;top:137px;width:1px;height:192px;background:#2c2c2c"></div>
<div class="ab" style="left:1033px;top:329px;width:1px;height:232px;background:rgba(0,0,0,.22)"></div>
<div class="ab" style="left:1094px;top:137px;width:1px;height:192px;background:#2c2c2c"></div>
<div class="ab" style="left:1094px;top:329px;width:1px;height:232px;background:rgba(0,0,0,.22)"></div>
<div class="ab" style="left:1156px;top:137px;width:1px;height:192px;background:#2c2c2c"></div>
<div class="ab" style="left:1156px;top:329px;width:1px;height:232px;background:rgba(0,0,0,.22)"></div>
<div class="ab" style="left:1217px;top:137px;width:1px;height:192px;background:#2c2c2c"></div>
<div class="ab" style="left:1217px;top:329px;width:1px;height:232px;background:rgba(0,0,0,.22)"></div>
<div class="ab" style="left:1278px;top:137px;width:1px;height:192px;background:#2c2c2c"></div>
<div class="ab" style="left:1278px;top:329px;width:1px;height:232px;background:rgba(0,0,0,.22)"></div>
<div class="ab" style="left:1340px;top:137px;width:1px;height:192px;background:#2c2c2c"></div>
<div class="ab" style="left:1340px;top:329px;width:1px;height:232px;background:rgba(0,0,0,.22)"></div>
<div class="ab" style="left:1401px;top:137px;width:1px;height:192px;background:#2c2c2c"></div>
<div class="ab" style="left:1401px;top:329px;width:1px;height:232px;background:rgba(0,0,0,.22)"></div>
<div class="ab" style="left:1462px;top:137px;width:1px;height:192px;background:#2c2c2c"></div>
<div class="ab" style="left:1462px;top:329px;width:1px;height:232px;background:rgba(0,0,0,.22)"></div>
<div class="ab" style="left:1523px;top:137px;width:1px;height:192px;background:#2c2c2c"></div>
<div class="ab" style="left:1523px;top:329px;width:1px;height:232px;background:rgba(0,0,0,.22)"></div>
<div class="ab" style="left:1585px;top:137px;width:1px;height:192px;background:#2c2c2c"></div>
<div class="ab" style="left:1585px;top:329px;width:1px;height:232px;background:rgba(0,0,0,.22)"></div>
<div class="ab" style="left:1646px;top:137px;width:1px;height:192px;background:#2c2c2c"></div>
<div class="ab" style="left:1646px;top:329px;width:1px;height:232px;background:rgba(0,0,0,.22)"></div>
<div class="ab" style="left:1690px;top:137px;width:10px;height:440px;background:#000"></div>
<div class="ab" style="left:1693px;top:139px;width:7.5px;height:96px;background:linear-gradient(90deg,#f4f4f4,#d8d8d8);border-radius:4px"></div>
<div class="hdr" style="top:329px;height:100px"></div>
<div class="ab t12" style="left:316px;top:336px;color:#0a0a0a">dialogue</div>
<div class="btn" style="left:427px;top:333px;width:36px;height:18.5px;line-height:17px">SOLO</div>
<div class="btn" style="left:427px;top:354.3px;width:36px;height:18.5px;line-height:17px">MUTE</div>
<svg class="ab" style="left:424.8px;top:375.9px" width="40" height="40" viewBox="-20 -20 40 40"><defs><radialGradient id="tk0" cx="0.42" cy="0.3" r="0.8"><stop offset="0" stop-color="#f6f6f6"/><stop offset="1" stop-color="#b4b4b4"/></radialGradient></defs><path d="M14.71 -5.21 A15.600 15.600 0 0 1 10.64 11.41" fill="none" stroke="#494949" stroke-width="4.600"/><path d="M-11.83 11.43 A16.45 16.45 0 1 1 15.51 -5.49" fill="none" stroke="#dc1a4e" stroke-width="2.450"/><circle r="12.250" fill="url(#tk0)" stroke="#232323" stroke-width="2.600"/><path d="M0 0.200 L13.300 -2.550" stroke="#1c1c1c" stroke-width="2.500" stroke-linecap="round"/></svg>
<div class="ab t10" style="left:420px;top:414px;width:50px;text-align:center;color:#141414;letter-spacing:0">0.0 dB</div>
<div class="ab" style="left:467.6px;top:332px;width:9.3px;height:94px;background:#2b2b2b;border-radius:2.5px"></div><div class="ab" style="left:468.6px;top:333.2px;width:7.3px;height:91.6px;border-radius:1.5px;background:linear-gradient(#430e0e 0,#4a1111 17.5px,#573710 18.5px,#573710 24.5px,#4f4c12 25.5px,#48480f 38px,#2a4410 40px,#2e5211 100%)"></div>
<div class="hdr" style="top:431px;height:100px"></div>
<div class="ab t12" style="left:316px;top:438px;color:#0a0a0a">snapshot</div>
<div class="btn" style="left:427px;top:435px;width:36px;height:18.5px;line-height:17px">SOLO</div>
<div class="btn" style="left:427px;top:456.3px;width:36px;height:18.5px;line-height:17px">MUTE</div>
<svg class="ab" style="left:424.8px;top:477.9px" width="40" height="40" viewBox="-20 -20 40 40"><defs><radialGradient id="tk1" cx="0.42" cy="0.3" r="0.8"><stop offset="0" stop-color="#f6f6f6"/><stop offset="1" stop-color="#b4b4b4"/></radialGradient></defs><path d="M14.71 -5.21 A15.600 15.600 0 0 1 10.64 11.41" fill="none" stroke="#494949" stroke-width="4.600"/><path d="M-11.83 11.43 A16.45 16.45 0 1 1 15.51 -5.49" fill="none" stroke="#dc1a4e" stroke-width="2.450"/><circle r="12.250" fill="url(#tk1)" stroke="#232323" stroke-width="2.600"/><path d="M0 0.200 L13.300 -2.550" stroke="#1c1c1c" stroke-width="2.500" stroke-linecap="round"/></svg>
<div class="ab t10" style="left:420px;top:516px;width:50px;text-align:center;color:#141414;letter-spacing:0">0.0 dB</div>
<div class="ab" style="left:467.6px;top:434px;width:9.3px;height:94px;background:#2b2b2b;border-radius:2.5px"></div><div class="ab" style="left:468.6px;top:435.2px;width:7.3px;height:91.6px;border-radius:1.5px;background:linear-gradient(#430e0e 0,#4a1111 17.5px,#573710 18.5px,#573710 24.5px,#4f4c12 25.5px,#48480f 38px,#2a4410 40px,#2e5211 100%)"></div>
<div class="hdr" style="top:533px;height:28px"></div>
<div class="ab t12" style="left:316px;top:540px;color:#101018">Master</div>
<div class="btn" style="left:389px;top:537px;width:36px;height:19.2px;line-height:16.8px;color:#a2a2a2;font-size:9.6px;letter-spacing:0.1px;background:linear-gradient(#dedede,#cecece)">MON</div>
<div class="btn" style="left:427.3px;top:537px;width:35.700px;height:19.8px;line-height:18px;border-radius:4.5px;border:2px solid #141a1a;box-shadow:none;background:linear-gradient(90deg,#e2004f 0,#e2004f 25.300px,#181818 25.300px,#181818 26px,#bcbcbc 26px,#bcbcbc 100%);text-align:left;padding-left:8.9px;color:#0a0010;font-size:9.3px;letter-spacing:0.8px">0dB</div>
<svg class="ab" style="left:430px;top:543.4px" width="5.800" height="7.600" viewBox="0 0 7 9" preserveAspectRatio="none"><path d="M0 0 L7 4.500 L0 9z" fill="#1e2626"/></svg>
<div class="ab" style="left:467.6px;top:536.3px;width:9.3px;height:21.4px;background:#2b2b2b;border-radius:2.5px"></div><div class="ab" style="left:468.6px;top:537.5px;width:7.3px;height:19.0px;border-radius:1.5px;background:linear-gradient(#4a1111 0,#4a1111 3px,#573710 3.5px,#4f4c12 6px,#2a4410 8.5px,#2e5211 100%)"></div>
<div class="ab" style="left:482px;top:329px;width:2px;height:235px;background:#80cc28"></div>
<div class="ab" style="left:481px;top:329px;width:1px;height:232px;background:#0a0a14"></div>
<div class="ab" style="left:692.3px;top:329px;width:22.7px;height:100px;background:#000;border-radius:6px"></div>
<div class="ab" style="left:694.9px;top:331.4px;width:18.1px;height:96px;background:#121a28;border-radius:4px"></div>
<div class="ab" style="left:694.9px;top:331.4px;width:18.1px;height:12.6px;background:#2b62c4;border-radius:4px 4px 0 0"></div>
<div class="ab" style="left:723.3px;top:329px;width:22.3px;height:100px;background:#000;border-radius:6px"></div>
<div class="ab" style="left:725.9px;top:331.4px;width:17.7px;height:96px;background:#121a28;border-radius:4px"></div>
<div class="ab" style="left:725.9px;top:331.4px;width:17.7px;height:12.6px;background:#2b62c4;border-radius:4px 4px 0 0"></div>
<div class="ab" style="left:754.4px;top:329px;width:22.0px;height:100px;background:#000;border-radius:6px"></div>
<div class="ab" style="left:757.0px;top:331.4px;width:17.4px;height:96px;background:#121a28;border-radius:4px"></div>
<div class="ab" style="left:757.0px;top:331.4px;width:17.4px;height:12.6px;background:#2b62c4;border-radius:4px 4px 0 0"></div>
<div class="ab" style="left:789.0px;top:329px;width:21.1px;height:100px;background:#000;border-radius:6px"></div>
<div class="ab" style="left:791.6px;top:331.4px;width:16.5px;height:96px;background:#121a28;border-radius:4px"></div>
<div class="ab" style="left:791.6px;top:331.4px;width:16.5px;height:12.6px;background:#2b62c4;border-radius:4px 4px 0 0"></div>
<div class="ab" style="left:1060.3px;top:329px;width:22.7px;height:100px;background:#000;border-radius:6px"></div>
<div class="ab" style="left:1062.9px;top:331.4px;width:18.1px;height:96px;background:#121a28;border-radius:4px"></div>
<div class="ab" style="left:1062.9px;top:331.4px;width:18.1px;height:12.6px;background:#2b62c4;border-radius:4px 4px 0 0"></div>
<div class="ab" style="left:1091.3px;top:329px;width:22.3px;height:100px;background:#000;border-radius:6px"></div>
<div class="ab" style="left:1093.9px;top:331.4px;width:17.7px;height:96px;background:#121a28;border-radius:4px"></div>
<div class="ab" style="left:1093.9px;top:331.4px;width:17.7px;height:12.6px;background:#2b62c4;border-radius:4px 4px 0 0"></div>
<div class="ab" style="left:1122.4px;top:329px;width:22.0px;height:100px;background:#000;border-radius:6px"></div>
<div class="ab" style="left:1125.0px;top:331.4px;width:17.4px;height:96px;background:#121a28;border-radius:4px"></div>
<div class="ab" style="left:1125.0px;top:331.4px;width:17.4px;height:12.6px;background:#2b62c4;border-radius:4px 4px 0 0"></div>
<div class="ab" style="left:1157.0px;top:329px;width:21.1px;height:100px;background:#000;border-radius:6px"></div>
<div class="ab" style="left:1159.6px;top:331.4px;width:16.5px;height:96px;background:#121a28;border-radius:4px"></div>
<div class="ab" style="left:1159.6px;top:331.4px;width:16.5px;height:12.6px;background:#2b62c4;border-radius:4px 4px 0 0"></div>
<div class="ab" style="left:1428.3px;top:329px;width:22.7px;height:100px;background:#000;border-radius:6px"></div>
<div class="ab" style="left:1430.9px;top:331.4px;width:18.1px;height:96px;background:#121a28;border-radius:4px"></div>
<div class="ab" style="left:1430.9px;top:331.4px;width:18.1px;height:12.6px;background:#2b62c4;border-radius:4px 4px 0 0"></div>
<div class="ab" style="left:1459.3px;top:329px;width:22.3px;height:100px;background:#000;border-radius:6px"></div>
<div class="ab" style="left:1461.9px;top:331.4px;width:17.7px;height:96px;background:#121a28;border-radius:4px"></div>
<div class="ab" style="left:1461.9px;top:331.4px;width:17.7px;height:12.6px;background:#2b62c4;border-radius:4px 4px 0 0"></div>
<div class="ab" style="left:1490.4px;top:329px;width:22.0px;height:100px;background:#000;border-radius:6px"></div>
<div class="ab" style="left:1493.0px;top:331.4px;width:17.4px;height:96px;background:#121a28;border-radius:4px"></div>
<div class="ab" style="left:1493.0px;top:331.4px;width:17.4px;height:12.6px;background:#2b62c4;border-radius:4px 4px 0 0"></div>
<div class="ab" style="left:1525.0px;top:329px;width:21.1px;height:100px;background:#000;border-radius:6px"></div>
<div class="ab" style="left:1527.6px;top:331.4px;width:16.5px;height:96px;background:#121a28;border-radius:4px"></div>
<div class="ab" style="left:1527.6px;top:331.4px;width:16.5px;height:12.6px;background:#2b62c4;border-radius:4px 4px 0 0"></div>
<div class="ab" style="left:1031px;top:431px;width:147px;height:99px;background:#0a0a0a;border-radius:4px"></div>
<div class="ab" style="left:1032.2px;top:433.8px;width:143.8px;height:12px;background:#b8382b;border-radius:3px 3px 0 0"></div>
<div class="ab" style="left:1037.5px;top:451px;width:136.5px;height:72.5px;background:linear-gradient(#6a4c48,#5c3e3a);border-radius:3px"></div>
<svg class="ab" style="left:1036px;top:435.5px" width="8" height="8" viewBox="0 0 9 9"><path d="M2 1 H8 V7 L6 5 L2.500 8.500 L0.500 6.500 L4 3z" fill="#fff"/></svg>
<div class="ab" style="left:1043.8px;top:432.3px;font-family:'Liberation Serif',serif;font-style:italic;font-weight:normal;font-size:11px;line-height:14px;color:#f4e4e4;white-space:nowrap;width:130px;overflow:hidden;letter-spacing:0.03px">char_granny_laughs_down</div>
<div class="ab" style="left:664px;top:329px;width:7px;height:233.5px;background:rgba(24,16,40,.3)"></div><div class="ab" style="left:665px;top:329px;width:5px;height:233.5px;background:linear-gradient(90deg,#cdcad3 0px,#cdcad3 1px,#78be20 1px,#78be20 3px,#cdcad3 3px,#cdcad3 4px,#78be20 4px,#78be20 5px)"></div>
<div class="ab" style="left:696px;top:329px;width:16px;height:233.5px;background:rgba(24,16,40,.3)"></div><div class="ab" style="left:697px;top:329px;width:14px;height:233.5px;background:linear-gradient(90deg,#78be20 0px,#78be20 1px,#cdcad3 1px,#cdcad3 3px,#78be20 3px,#78be20 4px,#cdcad3 4px,#cdcad3 6px,#78be20 6px,#78be20 7px,#cdcad3 7px,#cdcad3 9px,#78be20 9px,#78be20 11px,#cdcad3 11px,#cdcad3 12px,#78be20 12px,#78be20 13px,#cdcad3 13px,#cdcad3 14px)"></div>
<div class="ab" style="left:726px;top:329px;width:17px;height:233.5px;background:rgba(24,16,40,.3)"></div><div class="ab" style="left:727px;top:329px;width:15px;height:233.5px;background:linear-gradient(90deg,#78be20 0px,#78be20 1px,#cdcad3 1px,#cdcad3 2px,#78be20 2px,#78be20 4px,#cdcad3 4px,#cdcad3 5px,#78be20 5px,#78be20 7px,#cdcad3 7px,#cdcad3 8px,#78be20 8px,#78be20 9px,#cdcad3 9px,#cdcad3 11px,#78be20 11px,#78be20 12px,#cdcad3 12px,#cdcad3 13px,#78be20 13px,#78be20 15px)"></div>
<div class="ab" style="left:756px;top:329px;width:18px;height:233.5px;background:rgba(24,16,40,.3)"></div><div class="ab" style="left:757px;top:329px;width:16px;height:233.5px;background:linear-gradient(90deg,#cdcad3 0px,#cdcad3 1px,#78be20 1px,#78be20 2px,#cdcad3 2px,#cdcad3 3px,#78be20 3px,#78be20 5px,#cdcad3 5px,#cdcad3 6px,#78be20 6px,#78be20 8px,#cdcad3 8px,#cdcad3 9px,#78be20 9px,#78be20 10px,#cdcad3 10px,#cdcad3 11px,#78be20 11px,#78be20 14px,#cdcad3 14px,#cdcad3 15px,#78be20 15px,#78be20 16px)"></div>
<div class="ab" style="left:787px;top:329px;width:3px;height:233.5px;background:rgba(24,16,40,.3)"></div><div class="ab" style="left:788px;top:329px;width:1px;height:233.5px;background:linear-gradient(90deg,#78be20 0px,#78be20 1px)"></div>
<div class="ab" style="left:790px;top:329px;width:18px;height:233.5px;background:rgba(24,16,40,.3)"></div><div class="ab" style="left:791px;top:329px;width:16px;height:233.5px;background:linear-gradient(90deg,#cdcad3 0px,#cdcad3 1px,#78be20 1px,#78be20 2px,#cdcad3 2px,#cdcad3 4px,#78be20 4px,#78be20 5px,#cdcad3 5px,#cdcad3 7px,#78be20 7px,#78be20 9px,#cdcad3 9px,#cdcad3 10px,#78be20 10px,#78be20 12px,#cdcad3 12px,#cdcad3 13px,#78be20 13px,#78be20 14px,#cdcad3 14px,#cdcad3 15px,#78be20 15px,#78be20 16px)"></div>
<div class="ab" style="left:1032px;top:329px;width:3px;height:233.5px;background:rgba(24,16,40,.3)"></div><div class="ab" style="left:1033px;top:329px;width:1px;height:233.5px;background:linear-gradient(90deg,#78be20 0px,#78be20 1px)"></div>
<div class="ab" style="left:1034px;top:329px;width:4px;height:233.5px;background:rgba(24,16,40,.3)"></div><div class="ab" style="left:1035px;top:329px;width:2px;height:233.5px;background:linear-gradient(90deg,#78be20 0px,#78be20 2px)"></div>
<div class="ab" style="left:1063px;top:329px;width:17px;height:233.5px;background:rgba(24,16,40,.3)"></div><div class="ab" style="left:1064px;top:329px;width:15px;height:233.5px;background:linear-gradient(90deg,#78be20 0px,#78be20 1px,#cdcad3 1px,#cdcad3 2px,#78be20 2px,#78be20 4px,#cdcad3 4px,#cdcad3 5px,#78be20 5px,#78be20 6px,#cdcad3 6px,#cdcad3 8px,#78be20 8px,#78be20 9px,#cdcad3 9px,#cdcad3 10px,#78be20 10px,#78be20 12px,#cdcad3 12px,#cdcad3 13px,#78be20 13px,#78be20 15px)"></div>
<div class="ab" style="left:1093px;top:329px;width:8px;height:233.5px;background:rgba(24,16,40,.3)"></div><div class="ab" style="left:1094px;top:329px;width:6px;height:233.5px;background:linear-gradient(90deg,#cdcad3 0px,#cdcad3 1px,#78be20 1px,#78be20 2px,#cdcad3 2px,#cdcad3 3px,#78be20 3px,#78be20 4px,#cdcad3 4px,#cdcad3 5px,#78be20 5px,#78be20 6px)"></div>
<div class="ab" style="left:1100px;top:329px;width:11px;height:233.5px;background:rgba(24,16,40,.3)"></div><div class="ab" style="left:1101px;top:329px;width:9px;height:233.5px;background:linear-gradient(90deg,#cdcad3 0px,#cdcad3 2px,#78be20 2px,#78be20 3px,#cdcad3 3px,#cdcad3 5px,#78be20 5px,#78be20 6px,#cdcad3 6px,#cdcad3 8px,#78be20 8px,#78be20 9px)"></div>
<div class="ab" style="left:1124px;top:329px;width:18px;height:233.5px;background:rgba(24,16,40,.3)"></div><div class="ab" style="left:1125px;top:329px;width:16px;height:233.5px;background:linear-gradient(90deg,#cdcad3 0px,#cdcad3 1px,#78be20 1px,#78be20 2px,#cdcad3 2px,#cdcad3 4px,#78be20 4px,#78be20 5px,#cdcad3 5px,#cdcad3 7px,#78be20 7px,#78be20 8px,#cdcad3 8px,#cdcad3 9px,#78be20 9px,#78be20 11px,#cdcad3 11px,#cdcad3 12px,#78be20 12px,#78be20 14px,#cdcad3 14px,#cdcad3 15px,#78be20 15px,#78be20 16px)"></div>
<div class="ab" style="left:1155px;top:329px;width:3px;height:233.5px;background:rgba(24,16,40,.3)"></div><div class="ab" style="left:1156px;top:329px;width:1px;height:233.5px;background:linear-gradient(90deg,#78be20 0px,#78be20 1px)"></div>
<div class="ab" style="left:1158px;top:329px;width:7px;height:233.5px;background:rgba(24,16,40,.3)"></div><div class="ab" style="left:1159px;top:329px;width:5px;height:233.5px;background:linear-gradient(90deg,#78be20 0px,#78be20 1px,#cdcad3 1px,#cdcad3 2px,#78be20 2px,#78be20 3px,#cdcad3 3px,#cdcad3 4px,#78be20 4px,#78be20 5px)"></div>
<div class="ab" style="left:1164px;top:329px;width:4px;height:233.5px;background:rgba(24,16,40,.3)"></div><div class="ab" style="left:1165px;top:329px;width:2px;height:233.5px;background:linear-gradient(90deg,#cdcad3 0px,#cdcad3 1px,#78be20 1px,#78be20 2px)"></div>
<div class="ab" style="left:1167px;top:329px;width:8px;height:233.5px;background:rgba(24,16,40,.3)"></div><div class="ab" style="left:1168px;top:329px;width:6px;height:233.5px;background:linear-gradient(90deg,#cdcad3 0px,#cdcad3 1px,#78be20 1px,#78be20 2px,#cdcad3 2px,#cdcad3 3px,#78be20 3px,#78be20 6px)"></div>
<div class="ab" style="left:1400px;top:329px;width:6px;height:233.5px;background:rgba(24,16,40,.3)"></div><div class="ab" style="left:1401px;top:329px;width:4px;height:233.5px;background:linear-gradient(90deg,#cdcad3 0px,#cdcad3 2px,#78be20 2px,#78be20 4px)"></div>
<div class="ab" style="left:1431px;top:329px;width:17px;height:233.5px;background:rgba(24,16,40,.3)"></div><div class="ab" style="left:1432px;top:329px;width:15px;height:233.5px;background:linear-gradient(90deg,#cdcad3 0px,#cdcad3 2px,#78be20 2px,#78be20 3px,#cdcad3 3px,#cdcad3 5px,#78be20 5px,#78be20 6px,#cdcad3 6px,#cdcad3 8px,#78be20 8px,#78be20 10px,#cdcad3 10px,#cdcad3 11px,#78be20 11px,#78be20 12px,#cdcad3 12px,#cdcad3 14px,#78be20 14px,#78be20 15px)"></div>
<div class="ab" style="left:1461px;top:329px;width:18px;height:233.5px;background:rgba(24,16,40,.3)"></div><div class="ab" style="left:1462px;top:329px;width:16px;height:233.5px;background:linear-gradient(90deg,#cdcad3 0px,#cdcad3 1px,#78be20 1px,#78be20 3px,#cdcad3 3px,#cdcad3 4px,#78be20 4px,#78be20 5px,#cdcad3 5px,#cdcad3 7px,#78be20 7px,#78be20 9px,#cdcad3 9px,#cdcad3 10px,#78be20 10px,#78be20 11px,#cdcad3 11px,#cdcad3 13px,#78be20 13px,#78be20 14px,#cdcad3 14px,#cdcad3 15px,#78be20 15px,#78be20 16px)"></div>
<div class="ab" style="left:1492px;top:329px;width:17px;height:233.5px;background:rgba(24,16,40,.3)"></div><div class="ab" style="left:1493px;top:329px;width:15px;height:233.5px;background:linear-gradient(90deg,#cdcad3 0px,#cdcad3 1px,#78be20 1px,#78be20 3px,#cdcad3 3px,#cdcad3 4px,#78be20 4px,#78be20 6px,#cdcad3 6px,#cdcad3 7px,#78be20 7px,#78be20 8px,#cdcad3 8px,#cdcad3 9px,#78be20 9px,#78be20 11px,#cdcad3 11px,#cdcad3 13px,#78be20 13px,#78be20 15px)"></div>
<div class="ab" style="left:1523px;top:329px;width:3px;height:233.5px;background:rgba(24,16,40,.3)"></div><div class="ab" style="left:1524px;top:329px;width:1px;height:233.5px;background:linear-gradient(90deg,#78be20 0px,#78be20 1px)"></div>
<div class="ab" style="left:1526px;top:329px;width:16px;height:233.5px;background:rgba(24,16,40,.3)"></div><div class="ab" style="left:1527px;top:329px;width:14px;height:233.5px;background:linear-gradient(90deg,#cdcad3 0px,#cdcad3 2px,#78be20 2px,#78be20 3px,#cdcad3 3px,#cdcad3 5px,#78be20 5px,#78be20 6px,#cdcad3 6px,#cdcad3 8px,#78be20 8px,#78be20 9px,#cdcad3 9px,#cdcad3 10px,#78be20 10px,#78be20 12px,#cdcad3 12px,#cdcad3 14px)"></div>
<div class="ab" style="left:1541px;top:329px;width:3px;height:233.5px;background:rgba(24,16,40,.3)"></div><div class="ab" style="left:1542px;top:329px;width:1px;height:233.5px;background:linear-gradient(90deg,#78be20 0px,#78be20 1px)"></div>
<div class="ab" style="left:666px;top:139px;width:2px;height:190px;background:#78be20"></div><div class="ab" style="left:669px;top:157px;width:1px;height:172px;background:#78be20"></div>
<div class="ab" style="left:1033px;top:139px;width:1px;height:190px;background:#78be20"></div><div class="ab" style="left:1035px;top:157px;width:2px;height:172px;background:#78be20"></div>
<div class="ab" style="left:1401px;top:139px;width:1px;height:190px;background:#78be20"></div><div class="ab" style="left:1403px;top:157px;width:2px;height:172px;background:#78be20"></div>
<div class="ab" style="left:788px;top:235px;width:1px;height:94px;background:#78be20"></div>
<div class="ab" style="left:1156px;top:235px;width:1px;height:94px;background:#78be20"></div>
<div class="ab" style="left:1524px;top:235px;width:1px;height:94px;background:#78be20"></div>
<div class="mk" style="left:666px;top:139px;width:102px;clip-path:polygon(0 0,93px 0,100% 50%,93px 100%,0 100%);padding-left:9.2px">To 01d_end_hub</div>
<div class="mk" style="left:669px;top:187px;width:108.20000000000005px;clip-path:polygon(0 0,99.20000000000005px 0,100% 50%,99.20000000000005px 100%,0 100%);padding-left:4.1px">To 01a_hub_mid_C</div>
<div class="mk" style="left:669px;top:235px;width:93px;clip-path:polygon(0 0,84px 0,100% 50%,84px 100%,0 100%);padding-left:4.1px">To 01b_mid_20</div>
<div class="mk" style="left:669px;top:259px;width:93px;clip-path:polygon(0 0,84px 0,100% 50%,84px 100%,0 100%);padding-left:3.2px">To 01b_mid_09</div>
<div class="mk" style="left:669px;top:283px;width:93px;clip-path:polygon(0 0,84px 0,100% 50%,84px 100%,0 100%);padding-left:6.3px">To 01b_mid_28</div>
<div class="mk" style="left:669px;top:307px;width:93px;clip-path:polygon(0 0,84px 0,100% 50%,84px 100%,0 100%);padding-left:3.2px">To 01b_mid_07</div>
<div class="mk" style="left:788px;top:235px;width:91px;clip-path:polygon(0 0,82px 0,100% 50%,82px 100%,0 100%);padding-left:6.1px">To 01d_per_10</div>
<div class="mk" style="left:788px;top:259px;width:91px;clip-path:polygon(0 0,82px 0,100% 50%,82px 100%,0 100%);padding-left:6.1px">To 01d_per_09</div>
<div class="mk" style="left:788px;top:283px;width:91px;clip-path:polygon(0 0,82px 0,100% 50%,82px 100%,0 100%);padding-left:6.1px">To 01d_per_08</div>
<div class="mk" style="left:788px;top:307px;width:91px;clip-path:polygon(0 0,82px 0,100% 50%,82px 100%,0 100%);padding-left:6.1px">To 01d_per_07</div>
<div class="mk" style="left:1033px;top:139px;width:102px;clip-path:polygon(0 0,93px 0,100% 50%,93px 100%,0 100%);padding-left:5.8px">To 02d_end_hub</div>
<div class="mk" style="left:1035px;top:187px;width:109.20000000000005px;clip-path:polygon(0 0,100.20000000000005px 0,100% 50%,100.20000000000005px 100%,0 100%);padding-left:5.9px">To 02a_hub_mid_C</div>
<div class="mk" style="left:1035px;top:235px;width:94px;clip-path:polygon(0 0,85px 0,100% 50%,85px 100%,0 100%);padding-left:5.9px">To 02b_mid_20</div>
<div class="mk" style="left:1035px;top:259px;width:94px;clip-path:polygon(0 0,85px 0,100% 50%,85px 100%,0 100%);padding-left:5.9px">To 02b_mid_19</div>
<div class="mk" style="left:1035px;top:283px;width:94px;clip-path:polygon(0 0,85px 0,100% 50%,85px 100%,0 100%);padding-left:3.8px">To 02b_mid_08</div>
<div class="mk" style="left:1035px;top:307px;width:94px;clip-path:polygon(0 0,85px 0,100% 50%,85px 100%,0 100%);padding-left:3.8px">To 02b_mid_07</div>
<div class="mk" style="left:1156px;top:235px;width:91px;clip-path:polygon(0 0,82px 0,100% 50%,82px 100%,0 100%);padding-left:6.0px">To 02d_per_10</div>
<div class="mk" style="left:1156px;top:259px;width:91px;clip-path:polygon(0 0,82px 0,100% 50%,82px 100%,0 100%);padding-left:6.0px">To 02d_per_09</div>
<div class="mk" style="left:1156px;top:283px;width:91px;clip-path:polygon(0 0,82px 0,100% 50%,82px 100%,0 100%);padding-left:6.0px">To 02d_per_08</div>
<div class="mk" style="left:1156px;top:307px;width:91px;clip-path:polygon(0 0,82px 0,100% 50%,82px 100%,0 100%);padding-left:6.0px">To 02d_per_07</div>
<div class="mk" style="left:1401px;top:139px;width:102px;clip-path:polygon(0 0,93px 0,100% 50%,93px 100%,0 100%);padding-left:7.8px">To 03d_end_hub</div>
<div class="mk" style="left:1403px;top:187px;width:109.20000000000005px;clip-path:polygon(0 0,100.20000000000005px 0,100% 50%,100.20000000000005px 100%,0 100%);padding-left:4.9px">To 03a_hub_mid_C</div>
<div class="mk" style="left:1403px;top:235px;width:94px;clip-path:polygon(0 0,85px 0,100% 50%,85px 100%,0 100%);padding-left:6.7px">To 03b_mid_30</div>
<div class="mk" style="left:1403px;top:259px;width:94px;clip-path:polygon(0 0,85px 0,100% 50%,85px 100%,0 100%);padding-left:4.0px">To 03b_mid_09</div>
<div class="mk" style="left:1403px;top:283px;width:94px;clip-path:polygon(0 0,85px 0,100% 50%,85px 100%,0 100%);padding-left:6.7px">To 03b_mid_28</div>
<div class="mk" style="left:1403px;top:307px;width:94px;clip-path:polygon(0 0,85px 0,100% 50%,85px 100%,0 100%);padding-left:4.0px">To 03b_mid_07</div>
<div class="mk" style="left:1524px;top:235px;width:91px;clip-path:polygon(0 0,82px 0,100% 50%,82px 100%,0 100%);padding-left:6.0px">To 03d_per_10</div>
<div class="mk" style="left:1524px;top:259px;width:91px;clip-path:polygon(0 0,82px 0,100% 50%,82px 100%,0 100%);padding-left:6.0px">To 03d_per_09</div>
<div class="mk" style="left:1524px;top:283px;width:91px;clip-path:polygon(0 0,82px 0,100% 50%,82px 100%,0 100%);padding-left:6.0px">To 03d_per_08</div>
<div class="mk" style="left:1524px;top:307px;width:91px;clip-path:polygon(0 0,82px 0,100% 50%,82px 100%,0 100%);padding-left:6.0px">To 03d_per_07</div>
<div class="ab" style="left:695.8px;top:124px;width:1.4px;height:437px;background:#ececec"></div>
<svg class="ab" style="left:686px;top:114px" width="21" height="12" viewBox="0 0 21 12"><path d="M1 1 H20 L10.5 10.8z" fill="#000"/><path d="M4 2.300 H17.100 L10.550 9.100z" fill="#f6f6f6"/></svg>
</body></html>
